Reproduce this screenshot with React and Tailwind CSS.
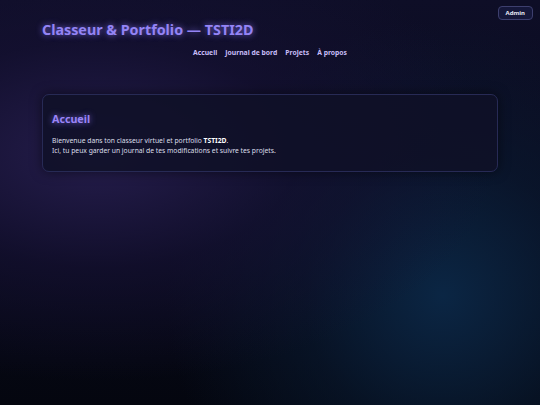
import React from "react";

export default function App() {
  return (
    <div className="relative w-full h-[405px] overflow-hidden font-['Noto_Sans',sans-serif] bg-[#060918] bg-[radial-gradient(ellipse_at_18%_38%,#251d4c_0%,rgba(22,17,52,0.65)_32%,transparent_64%),radial-gradient(circle_at_82%_73%,#0b2644_0%,rgba(10,30,55,0.5)_26%,transparent_52%),linear-gradient(180deg,#0e0e27_0%,#080a1b_55%,#04060f_100%)]">
      <button className="absolute top-[6px] right-[7px] h-[14px] px-[7px] rounded-[4px] border border-[#3d3f6e] bg-[#15173a] text-[6px] font-bold text-[#e5e7f5] leading-none">
        Admin
      </button>
      <header className="px-[42px] pt-[21px]">
        <h1 className="text-[14.3px] leading-[18px] font-bold text-[#9484f5] [text-shadow:0_0_6px_rgba(139,120,255,0.8)]">
          Classeur &amp; Portfolio — TSTI2D
        </h1>
        <nav className="flex justify-center gap-[8px] mt-[9px] text-[6.8px] leading-[10px] font-bold text-[#c7bdf8]">
          <a>Accueil</a>
          <a>Journal de bord</a>
          <a>Projets</a>
          <a>À propos</a>
        </nav>
      </header>
      <main className="mx-[42px] mt-[36px] rounded-[7px] border border-[#272a55] bg-[#0f1127]/85 px-[9px] pt-[17px] pb-[15px] shadow-[0_0_12px_rgba(0,0,0,0.5)]">
        <h2 className="text-[10.7px] leading-[15px] font-bold text-[#9a84f7] [text-shadow:0_0_6px_rgba(139,120,255,0.8)]">
          Accueil
        </h2>
        <p className="mt-[9px] text-[6.75px] leading-[10px] text-[#dcdee9]">
          Bienvenue dans ton classeur virtuel et portfolio <strong className="text-white">TSTI2D</strong>.
          <br />
          Ici, tu peux garder un journal de tes modifications et suivre tes projets.
        </p>
      </main>
    </div>
  );
}
